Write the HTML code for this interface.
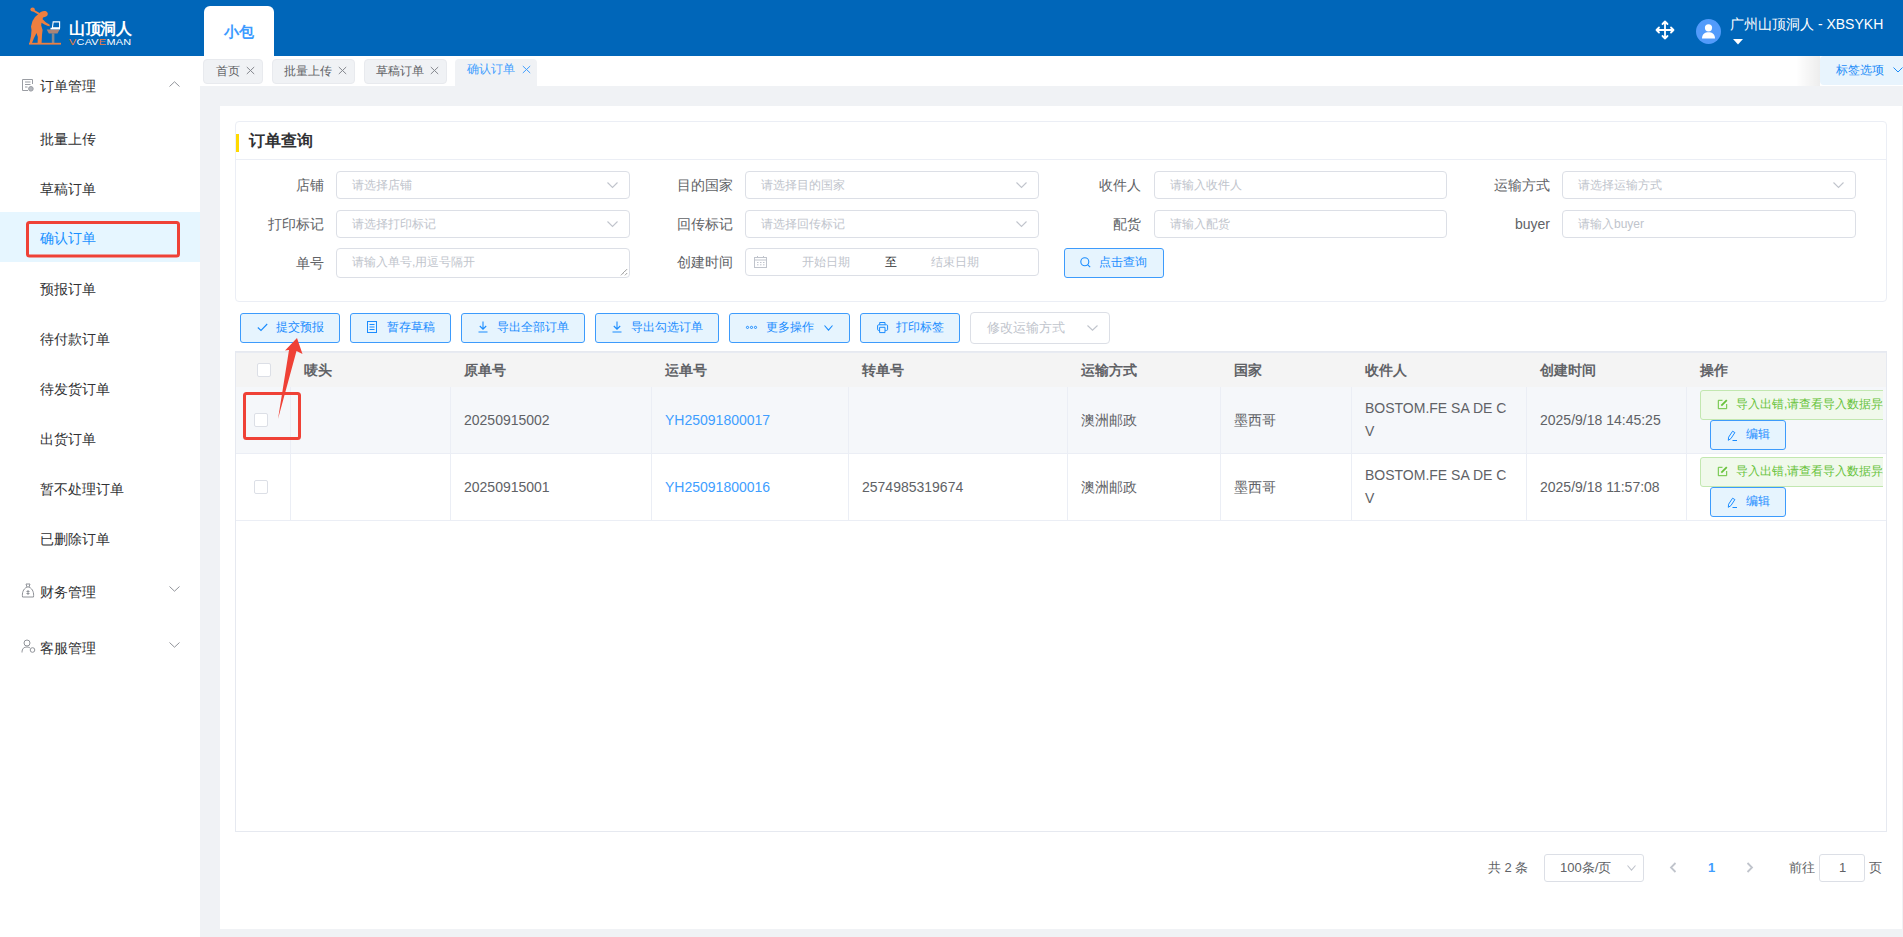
<!DOCTYPE html>
<html><head><meta charset="utf-8">
<style>
*{box-sizing:border-box;margin:0;padding:0}
html,body{width:1903px;height:937px;overflow:hidden}
body{position:relative;font-family:"Liberation Sans",sans-serif;background:#f0f2f5;color:#303133;font-size:14px}
.a{position:absolute}
.t{position:absolute;white-space:nowrap}
#hdr{left:0;top:0;width:1903px;height:56px;background:#0066b9}
#side{left:0;top:56px;width:200px;height:881px;background:#fff}
#tags{left:200px;top:56px;width:1703px;height:30px;background:#fff}
.tag{position:absolute;top:3px;height:25px;background:#f0f2f5;border:1px solid #e8eaee;border-radius:4px;font-size:12px;color:#606266;line-height:22px}
.mi{position:absolute;left:40px;font-size:14px;color:#303133;line-height:20px}
#card{left:220px;top:106px;width:1682px;height:823px;background:#fff}
#box{left:235px;top:121px;width:1652px;height:181px;border:1px solid #ebeef5;border-radius:4px;background:#fff}
.lbl{position:absolute;font-size:14px;color:#606266;line-height:20px;text-align:right;width:100px}
.inp{position:absolute;height:28px;border:1px solid #dcdfe6;border-radius:4px;background:#fff}
.ph{position:absolute;left:15px;top:0;line-height:26px;font-size:12px;color:#c0c4cc;white-space:nowrap}
.btn{position:absolute;top:313px;height:30px;background:#e6f4fe;border:1px solid #3d9bfc;border-radius:3px;color:#409eff;font-size:12px}
.btn span{position:absolute;top:0;line-height:28px;white-space:nowrap}
.th{position:absolute;top:351px;line-height:36px;font-size:14px;font-weight:bold;color:#606266;white-space:nowrap}
.td{position:absolute;font-size:14px;color:#606266;white-space:nowrap;line-height:20px}
.vl{position:absolute;width:1px;background:#ebeef5}
.hl{position:absolute;height:1px;background:#ebeef5}
</style></head><body>

<!-- header -->
<div id="hdr" class="a">
  <svg class="a" style="left:0;top:0" width="70" height="50" viewBox="0 0 70 50">
    <g fill="#ee7f3f">
      <ellipse cx="32.6" cy="9.4" rx="2.2" ry="2"/>
      <path d="M33 9.2 L40 13.2 L39 15 L32 10.8 Z"/>
      <path d="M39 13.6 C40.5 11.5 43 10.6 45.5 11 C47.6 11.5 48.2 13.5 47.6 15 C47 16.3 46 16.6 45.5 16.8 L43 17.6 L42.6 19.2 L46 22.5 L49.5 24.6 L49.8 26.2 L48 26 L44.5 24.5 L41.5 22.8 L41.2 25.5 L42.6 30 L42 35 L41.6 43 L37.6 43 L37.8 37 L36.5 33 L34 38 L32 43 L29.5 43 L31 36 L31.5 30 L31 26.5 L32.5 21 L35 17 Z"/>
      <rect x="29" y="42.8" width="32" height="1.8"/>
    </g>
    <path d="M46.7 29.4 L59.6 29.4 L57.5 33.6 L48.8 33.6 Z" fill="#c98a6a" opacity=".85"/>
    <rect x="51.8" y="33.5" width="2.6" height="9.5" fill="#b9977f" opacity=".7"/>
    <path d="M53.2 21.9 H59.6 V27.8 H52.4 Z" fill="none" stroke="#fff" stroke-width="1.1"/>
    <rect x="50.5" y="27.8" width="9.5" height="1.6" fill="#fff"/>
  </svg>
  <div class="t" style="left:69px;top:18px;font-size:16px;color:#fff;line-height:22px;letter-spacing:-0.5px;font-weight:bold;-webkit-text-stroke:0">山顶洞人</div>
  <div class="t" style="left:69px;top:37.5px;font-size:8.5px;color:#fff;line-height:8px;letter-spacing:0.2px;transform:scaleX(1.28);transform-origin:0 0"><span style="color:#f07f3c">V</span>CAV<span style="color:#f07f3c">E</span>MA<span>N</span></div>
  <div class="a" style="left:204px;top:6px;width:70px;height:50px;background:#fff;border-radius:6px 6px 0 0"></div>
  <div class="t" style="left:204px;top:22px;width:70px;text-align:center;font-size:15px;font-weight:bold;color:#3d9bff;line-height:20px">小包</div>
  <!-- move icon -->
  <svg class="a" style="left:1655px;top:20px" width="20" height="20" viewBox="0 0 20 20" fill="none" stroke="#fff" stroke-width="1.8" stroke-linecap="round" stroke-linejoin="round">
    <path d="M10 1.5 V18.5 M1.5 10 H18.5 M7.5 4 L10 1.5 L12.5 4 M7.5 16 L10 18.5 L12.5 16 M4 7.5 L1.5 10 L4 12.5 M16 7.5 L18.5 10 L16 12.5"/>
  </svg>
  <div class="a" style="left:1696px;top:19px;width:25px;height:25px;border-radius:50%;background:#529bfb"></div>
  <svg class="a" style="left:1696px;top:19px" width="25" height="25" viewBox="0 0 25 25" fill="#fff">
    <circle cx="12.5" cy="8.8" r="3.6"/>
    <path d="M6 19.5 C6 15 9 13.2 12.5 13.2 C16 13.2 19 15 19 19.5 Z"/>
  </svg>
  <div class="t" style="left:1730px;top:14px;font-size:14px;color:#fff;line-height:20px">广州山顶洞人 - XBSYKH</div>
  <svg class="a" style="left:1733px;top:39px" width="10" height="6" viewBox="0 0 10 6"><path d="M0 0 H10 L5 5.5 Z" fill="#fff"/></svg>
</div>

<!-- sidebar -->
<div id="side" class="a">
  <svg class="a" style="left:18px;top:18px" width="20" height="20" viewBox="0 0 20 20" fill="none" stroke="#9a9da3" stroke-width="1"><path d="M14.5 10 V5.5 H4.5 V16.5 H10"/><path d="M7 8 H12.5 M7 10.5 H12.5 M7 13 H9.5"/><circle cx="12.9" cy="14.8" r="2.3" fill="#b4b7bd" stroke="#9a9da3"/></svg>
  <div class="mi" style="top:20px">订单管理</div>
  <svg class="a" style="left:169px;top:25px" width="11" height="6" viewBox="0 0 11 6"><path d="M0.5 5.5 L5.5 0.8 L10.5 5.5" fill="none" stroke="#909399" stroke-width="1"/></svg>
  <div class="mi" style="top:73px">批量上传</div>
  <div class="mi" style="top:123px">草稿订单</div>
  <div class="a" style="left:0;top:156px;width:200px;height:50px;background:#e6f6ff"></div>
  <div class="mi" style="top:172px;color:#1890ff">确认订单</div>
  <div class="mi" style="top:223px">预报订单</div>
  <div class="mi" style="top:273px">待付款订单</div>
  <div class="mi" style="top:323px">待发货订单</div>
  <div class="mi" style="top:373px">出货订单</div>
  <div class="mi" style="top:423px">暂不处理订单</div>
  <div class="mi" style="top:473px">已删除订单</div>
  <svg class="a" style="left:21px;top:527px" width="14" height="15" viewBox="0 0 14 15" fill="none" stroke="#909399" stroke-width="1">
    <path d="M5 1 L9 1 L8 4 L6 4 Z"/><path d="M6 4 C2 6 1 10 1.5 14 H12.5 C13 10 12 6 8 4"/><path d="M7 7 V12 M5.5 8.5 H8.5 M5.5 10.5 H8.5"/>
  </svg>
  <div class="mi" style="top:526px">财务管理</div>
  <svg class="a" style="left:169px;top:530px" width="11" height="6" viewBox="0 0 11 6"><path d="M0.5 0.5 L5.5 5.2 L10.5 0.5" fill="none" stroke="#909399" stroke-width="1"/></svg>
  <svg class="a" style="left:21px;top:583px" width="15" height="14" viewBox="0 0 15 14" fill="none" stroke="#909399" stroke-width="1">
    <circle cx="6" cy="4" r="3"/><path d="M1 13.5 C1 9.5 3 8 6 8 C7.5 8 8.5 8.5 9 9"/><circle cx="11.5" cy="11" r="2.3"/>
  </svg>
  <div class="mi" style="top:582px">客服管理</div>
  <svg class="a" style="left:169px;top:586px" width="11" height="6" viewBox="0 0 11 6"><path d="M0.5 0.5 L5.5 5.2 L10.5 0.5" fill="none" stroke="#909399" stroke-width="1"/></svg>
</div>

<!-- tags bar -->
<div id="tags" class="a">
  <div class="tag" style="left:3px;width:60px"><span class="t" style="left:12px">首页</span><svg class="a" style="left:42px;top:6px" width="9" height="9" viewBox="0 0 9 9"><path d="M0.8 1 L8.2 8 M8.2 1 L0.8 8" stroke="#84878e" stroke-width="1"/></svg></div>
  <div class="tag" style="left:72px;width:83px"><span class="t" style="left:11px">批量上传</span><svg class="a" style="left:65px;top:6px" width="9" height="9" viewBox="0 0 9 9"><path d="M0.8 1 L8.2 8 M8.2 1 L0.8 8" stroke="#84878e" stroke-width="1"/></svg></div>
  <div class="tag" style="left:164px;width:83px"><span class="t" style="left:11px">草稿订单</span><svg class="a" style="left:65px;top:6px" width="9" height="9" viewBox="0 0 9 9"><path d="M0.8 1 L8.2 8 M8.2 1 L0.8 8" stroke="#84878e" stroke-width="1"/></svg></div>
  <div class="tag" style="left:255px;width:82px;height:27px;border:0;border-radius:4px 4px 0 0;color:#409eff"><span class="t" style="left:12px;top:-1px">确认订单</span><svg class="a" style="left:67px;top:6px" width="9" height="9" viewBox="0 0 9 9"><path d="M0.8 1 L8.2 8 M8.2 1 L0.8 8" stroke="#409eff" stroke-width="1"/></svg></div>
  <div class="a" style="left:1596px;top:0;width:24px;height:30px;background:linear-gradient(to right,rgba(0,0,0,0),rgba(0,0,0,0.07))"></div>
  <div class="a" style="left:1620px;top:0;width:83px;height:29px;background:#e8f4fd;border-radius:4px 0 0 4px;color:#1d8cf8;font-size:12px;line-height:29px"><span class="t" style="left:16px">标签选项</span></div>
  <svg class="a" style="left:1693px;top:11px" width="10" height="7" viewBox="0 0 10 7"><path d="M0.5 0.5 L5 5 L9.5 0.5" fill="none" stroke="#1d8cf8" stroke-width="1"/></svg>
</div>

<!-- main card -->
<div id="card" class="a"></div>
<div id="box" class="a">
  <div class="a" style="left:0;top:12px;width:3px;height:18px;background:#ffd900"></div>
  <div class="t" style="left:13px;top:7px;font-size:16px;font-weight:bold;color:#303133;line-height:24px">订单查询</div>
  <div class="hl" style="left:0;top:37px;width:1650px"></div>
</div>


<!-- form -->
<div class="lbl" style="left:224px;top:175px">店铺</div>
<div class="inp" style="left:336px;top:171px;width:294px"><span class="ph">请选择店铺</span><svg class="a" style="left:270px;top:10px" width="11" height="7" viewBox="0 0 11 7"><path d="M0.5 0.5 L5.5 5.5 L10.5 0.5" fill="none" stroke="#c0c4cc" stroke-width="1.1"/></svg></div>
<div class="lbl" style="left:633px;top:175px">目的国家</div>
<div class="inp" style="left:745px;top:171px;width:294px"><span class="ph">请选择目的国家</span><svg class="a" style="left:270px;top:10px" width="11" height="7" viewBox="0 0 11 7"><path d="M0.5 0.5 L5.5 5.5 L10.5 0.5" fill="none" stroke="#c0c4cc" stroke-width="1.1"/></svg></div>
<div class="lbl" style="left:1041px;top:175px">收件人</div>
<div class="inp" style="left:1154px;top:171px;width:293px"><span class="ph">请输入收件人</span></div>
<div class="lbl" style="left:1450px;top:175px">运输方式</div>
<div class="inp" style="left:1562px;top:171px;width:294px"><span class="ph">请选择运输方式</span><svg class="a" style="left:270px;top:10px" width="11" height="7" viewBox="0 0 11 7"><path d="M0.5 0.5 L5.5 5.5 L10.5 0.5" fill="none" stroke="#c0c4cc" stroke-width="1.1"/></svg></div>

<div class="lbl" style="left:224px;top:214px">打印标记</div>
<div class="inp" style="left:336px;top:210px;width:294px"><span class="ph">请选择打印标记</span><svg class="a" style="left:270px;top:10px" width="11" height="7" viewBox="0 0 11 7"><path d="M0.5 0.5 L5.5 5.5 L10.5 0.5" fill="none" stroke="#c0c4cc" stroke-width="1.1"/></svg></div>
<div class="lbl" style="left:633px;top:214px">回传标记</div>
<div class="inp" style="left:745px;top:210px;width:294px"><span class="ph">请选择回传标记</span><svg class="a" style="left:270px;top:10px" width="11" height="7" viewBox="0 0 11 7"><path d="M0.5 0.5 L5.5 5.5 L10.5 0.5" fill="none" stroke="#c0c4cc" stroke-width="1.1"/></svg></div>
<div class="lbl" style="left:1041px;top:214px">配货</div>
<div class="inp" style="left:1154px;top:210px;width:293px"><span class="ph">请输入配货</span></div>
<div class="lbl" style="left:1450px;top:214px">buyer</div>
<div class="inp" style="left:1562px;top:210px;width:294px"><span class="ph">请输入buyer</span></div>

<div class="lbl" style="left:224px;top:253px">单号</div>
<div class="inp" style="left:336px;top:248px;width:294px;height:30px"><span class="ph" style="line-height:27px">请输入单号,用逗号隔开</span>
 <svg class="a" style="left:283px;top:19px" width="8" height="8" viewBox="0 0 8 8"><path d="M1 7.2 L7.2 1 M5 7.2 L7.2 5" stroke="#555" stroke-width="0.9" stroke-dasharray="1 0.6"/></svg></div>
<div class="lbl" style="left:633px;top:252px">创建时间</div>
<div class="inp" style="left:745px;top:248px;width:294px"><svg class="a" style="left:8px;top:7px" width="13" height="12" viewBox="0 0 13 12" fill="none" stroke="#c0c4cc" stroke-width="1"><rect x="0.5" y="1.5" width="12" height="10"/><path d="M0.5 4 H12.5 M3 6.5 H4.5 M6 6.5 H7.5 M9 6.5 H10.5 M3 8.8 H4.5 M6 8.8 H7.5 M9 8.8 H10.5 M3.5 0 V2 M9.5 0 V2"/></svg>
 <span class="ph" style="left:56px">开始日期</span><span class="ph" style="left:139px;color:#303133">至</span><span class="ph" style="left:185px">结束日期</span></div>
<div class="a" style="left:1064px;top:248px;width:100px;height:30px;background:#e6f4fe;border:1px solid #3d9bfc;border-radius:3px"></div>
<svg class="a" style="left:1080px;top:257px" width="11" height="11" viewBox="0 0 11 11" fill="none" stroke="#1a8cfe" stroke-width="1.1"><circle cx="4.8" cy="4.8" r="4"/><path d="M7.8 7.8 L10.2 10.2"/></svg>
<div class="t" style="left:1099px;top:254px;font-size:12px;line-height:17px;color:#1a8cfe">点击查询</div>


<!-- buttons -->
<div class="btn" style="left:240px;width:100px"></div>
<svg class="a" style="left:257px;top:323px" width="11" height="9" viewBox="0 0 11 9"><path d="M0.8 4.5 L4 7.5 L10.2 1" fill="none" stroke="#1a8cfe" stroke-width="1.1"/></svg>
<div class="t" style="left:276px;top:319px;font-size:12px;line-height:17px;color:#1a8cfe">提交预报</div>

<div class="btn" style="left:350px;width:101px"></div>
<svg class="a" style="left:367px;top:321px" width="10" height="12" viewBox="0 0 10 12" fill="none" stroke="#1a8cfe" stroke-width="1"><rect x="0.5" y="0.5" width="9" height="11"/><path d="M2.5 3.5 H7.5 M2.5 6 H7.5 M2.5 8.5 H7.5"/></svg>
<div class="t" style="left:387px;top:319px;font-size:12px;line-height:17px;color:#1a8cfe">暂存草稿</div>

<div class="btn" style="left:461px;width:124px"></div>
<svg class="a" style="left:478px;top:321px" width="10" height="12" viewBox="0 0 10 12" fill="none" stroke="#1a8cfe" stroke-width="1.1"><path d="M5 0.5 V8 M1.8 5 L5 8.2 L8.2 5 M0.5 11 H9.5"/></svg>
<div class="t" style="left:497px;top:319px;font-size:12px;line-height:17px;color:#1a8cfe">导出全部订单</div>

<div class="btn" style="left:595px;width:124px"></div>
<svg class="a" style="left:612px;top:321px" width="10" height="12" viewBox="0 0 10 12" fill="none" stroke="#1a8cfe" stroke-width="1.1"><path d="M5 0.5 V8 M1.8 5 L5 8.2 L8.2 5 M0.5 11 H9.5"/></svg>
<div class="t" style="left:631px;top:319px;font-size:12px;line-height:17px;color:#1a8cfe">导出勾选订单</div>

<div class="btn" style="left:729px;width:121px"></div>
<svg class="a" style="left:745px;top:325px" width="13" height="5" viewBox="0 0 13 5" fill="none" stroke="#1a8cfe" stroke-width="1"><circle cx="2.5" cy="2.4" r="1.1"/><circle cx="6.5" cy="2.4" r="1.1"/><circle cx="10.5" cy="2.4" r="1.1"/></svg>
<div class="t" style="left:766px;top:319px;font-size:12px;line-height:17px;color:#1a8cfe">更多操作</div>
<svg class="a" style="left:824px;top:325px" width="9" height="6" viewBox="0 0 9 6"><path d="M0.5 0.5 L4.5 5.2 L8.5 0.5" fill="none" stroke="#1a8cfe" stroke-width="1.1"/></svg>

<div class="btn" style="left:860px;width:100px"></div>
<svg class="a" style="left:876px;top:321px" width="13" height="13" viewBox="0 0 13 13" fill="none" stroke="#1a8cfe" stroke-width="1"><path d="M3.7 3.6 V1.5 H9 V3.6"/><path d="M3.5 9.4 H2.6 Q1.6 9.4 1.6 8.4 V4.8 Q1.6 3.8 2.6 3.8 H10.6 Q11.6 3.8 11.6 4.8 V8.4 Q11.6 9.4 10.6 9.4 H9.2"/><path d="M3.6 6.3 H9 V11.6 H3.6 Z"/></svg>
<div class="t" style="left:896px;top:319px;font-size:12px;line-height:17px;color:#1a8cfe">打印标签</div>

<div class="a" style="left:970px;top:312px;width:140px;height:32px;border:1px solid #dcdfe6;border-radius:4px;background:#fff"></div>
<div class="t" style="left:987px;top:319px;font-size:13px;line-height:18px;color:#c0c4cc">修改运输方式</div>
<svg class="a" style="left:1087px;top:325px" width="11" height="6" viewBox="0 0 11 6"><path d="M0.5 0.5 L5.5 5.2 L10.5 0.5" fill="none" stroke="#c0c4cc" stroke-width="1.1"/></svg>

<!-- table -->
<div class="a" style="left:235px;top:351px;width:1652px;height:481px;border:1px solid #e6e9f0;background:#fff"></div>
<div class="a" style="left:236px;top:352px;width:1650px;height:35px;background:#f4f4f4;border-top:1px solid #e8ebf2"></div>
<div class="a" style="left:236px;top:387px;width:1650px;height:66px;background:#f5f7fa"></div>
<div class="hl" style="left:236px;top:453px;width:1650px"></div>
<div class="hl" style="left:236px;top:520px;width:1650px"></div>
<div class="vl" style="left:290px;top:387px;height:133px"></div>
<div class="vl" style="left:450px;top:387px;height:133px"></div>
<div class="vl" style="left:651px;top:387px;height:133px"></div>
<div class="vl" style="left:848px;top:387px;height:133px"></div>
<div class="vl" style="left:1067px;top:387px;height:133px"></div>
<div class="vl" style="left:1220px;top:387px;height:133px"></div>
<div class="vl" style="left:1351px;top:387px;height:133px"></div>
<div class="vl" style="left:1526px;top:387px;height:133px"></div>
<div class="vl" style="left:1686px;top:387px;height:133px"></div>
<div class="th" style="left:304px;top:353px;line-height:35px">唛头</div>
<div class="th" style="left:464px;top:353px;line-height:35px">原单号</div>
<div class="th" style="left:665px;top:353px;line-height:35px">运单号</div>
<div class="th" style="left:862px;top:353px;line-height:35px">转单号</div>
<div class="th" style="left:1081px;top:353px;line-height:35px">运输方式</div>
<div class="th" style="left:1234px;top:353px;line-height:35px">国家</div>
<div class="th" style="left:1365px;top:353px;line-height:35px">收件人</div>
<div class="th" style="left:1540px;top:353px;line-height:35px">创建时间</div>
<div class="th" style="left:1700px;top:353px;line-height:35px">操作</div>
<div class="a" style="left:257px;top:363px;width:14px;height:14px;border:1px solid #dcdfe6;border-radius:2px;background:#fff"></div>
<div class="a" style="left:254px;top:413px;width:14px;height:14px;border:1px solid #dcdfe6;border-radius:2px;background:#fff"></div>
<div class="a" style="left:254px;top:480px;width:14px;height:14px;border:1px solid #dcdfe6;border-radius:2px;background:#fff"></div>
<div class="td" style="left:464px;top:410px">20250915002</div>
<div class="td" style="left:665px;top:410px;color:#409eff">YH25091800017</div>
<div class="td" style="left:1081px;top:410px">澳洲邮政</div>
<div class="td" style="left:1234px;top:410px">墨西哥</div>
<div class="td" style="left:1365px;top:397px;line-height:23px">BOSTOM.FE SA DE C<br>V</div>
<div class="td" style="left:1540px;top:410px">2025/9/18 14:45:25</div>
<div class="a" style="left:1700px;top:390px;width:183px;height:30px;overflow:hidden">
 <div class="a" style="left:0;top:0;width:200px;height:30px;background:#f0f9eb;border:1px solid #c2e7b0;border-radius:3px"></div>
 <svg class="a" style="left:16.5px;top:9px" width="11" height="11" viewBox="0 0 11 11" fill="none" stroke="#67c23a" stroke-width="1"><path d="M9.7 5 V9.7 H1.3 V1.3 H5.5"/><path d="M4.3 6.7 L9.8 1.2" stroke-width="1.8"/></svg>
 <div class="t" style="left:36px;top:6px;font-size:12px;line-height:17px;color:#67c23a">导入出错,请查看导入数据异常</div>
</div>
<div class="a" style="left:1710px;top:420px;width:76px;height:30px;background:#e6f4fe;border:1px solid #3d9bfc;border-radius:3px"></div>
<svg class="a" style="left:1726px;top:429.5px" width="12" height="12" viewBox="0 0 12 12" fill="none" stroke="#1a8cfe" stroke-width="1"><path d="M2.3 10.3 L2.6 7.2 L6.6 1.2 L8.9 2.6 L4.9 8.6 Z M6.5 10.5 H11"/></svg>
<div class="t" style="left:1746px;top:426px;font-size:12px;line-height:17px;color:#1a8cfe">编辑</div>
<div class="td" style="left:464px;top:477px">20250915001</div>
<div class="td" style="left:665px;top:477px;color:#409eff">YH25091800016</div>
<div class="td" style="left:862px;top:477px">2574985319674</div>
<div class="td" style="left:1081px;top:477px">澳洲邮政</div>
<div class="td" style="left:1234px;top:477px">墨西哥</div>
<div class="td" style="left:1365px;top:464px;line-height:23px">BOSTOM.FE SA DE C<br>V</div>
<div class="td" style="left:1540px;top:477px">2025/9/18 11:57:08</div>
<div class="a" style="left:1700px;top:457px;width:183px;height:30px;overflow:hidden">
 <div class="a" style="left:0;top:0;width:200px;height:30px;background:#f0f9eb;border:1px solid #c2e7b0;border-radius:3px"></div>
 <svg class="a" style="left:16.5px;top:9px" width="11" height="11" viewBox="0 0 11 11" fill="none" stroke="#67c23a" stroke-width="1"><path d="M9.7 5 V9.7 H1.3 V1.3 H5.5"/><path d="M4.3 6.7 L9.8 1.2" stroke-width="1.8"/></svg>
 <div class="t" style="left:36px;top:6px;font-size:12px;line-height:17px;color:#67c23a">导入出错,请查看导入数据异常</div>
</div>
<div class="a" style="left:1710px;top:487px;width:76px;height:30px;background:#e6f4fe;border:1px solid #3d9bfc;border-radius:3px"></div>
<svg class="a" style="left:1726px;top:496.5px" width="12" height="12" viewBox="0 0 12 12" fill="none" stroke="#1a8cfe" stroke-width="1"><path d="M2.3 10.3 L2.6 7.2 L6.6 1.2 L8.9 2.6 L4.9 8.6 Z M6.5 10.5 H11"/></svg>
<div class="t" style="left:1746px;top:493px;font-size:12px;line-height:17px;color:#1a8cfe">编辑</div>

<!-- pagination -->
<div class="t" style="left:1488px;top:859px;font-size:13px;line-height:18px;color:#606266">共 2 条</div>
<div class="a" style="left:1544px;top:854px;width:100px;height:28px;border:1px solid #dcdfe6;border-radius:3px;background:#fff"></div>
<div class="t" style="left:1560px;top:859px;font-size:13px;line-height:18px;color:#606266">100条/页</div>
<svg class="a" style="left:1627px;top:865px" width="9" height="6" viewBox="0 0 9 6"><path d="M0.5 0.5 L4.5 5.2 L8.5 0.5" fill="none" stroke="#c0c4cc" stroke-width="1.1"/></svg>
<svg class="a" style="left:1669px;top:862px" width="8" height="11" viewBox="0 0 8 11"><path d="M6.5 1 L2 5.5 L6.5 10" fill="none" stroke="#c0c4cc" stroke-width="1.8"/></svg>
<div class="t" style="left:1708px;top:859px;font-size:13px;line-height:18px;color:#409eff;font-weight:bold">1</div>
<svg class="a" style="left:1746px;top:862px" width="8" height="11" viewBox="0 0 8 11"><path d="M1.5 1 L6 5.5 L1.5 10" fill="none" stroke="#c0c4cc" stroke-width="1.8"/></svg>
<div class="t" style="left:1789px;top:859px;font-size:13px;line-height:18px;color:#606266">前往</div>
<div class="a" style="left:1819px;top:854px;width:46px;height:28px;border:1px solid #dcdfe6;border-radius:3px;background:#fff"></div>
<div class="t" style="left:1839px;top:859px;font-size:13px;line-height:18px;color:#606266">1</div>
<div class="t" style="left:1869px;top:859px;font-size:13px;line-height:18px;color:#606266">页</div>

<!-- annotations -->
<svg class="a" style="left:0;top:0" width="1903" height="937">
 <rect x="27.5" y="222.5" width="151" height="33.5" rx="2" fill="none" stroke="#ef4136" stroke-width="3"/>
 <rect x="244.5" y="393.5" width="55" height="45" rx="2" fill="none" stroke="#ef4136" stroke-width="3"/>
 <polygon points="297,338 302.5,354 296.5,351 278,419 289,350 285,350.5" fill="#ef4136"/>
</svg>

</body></html>
